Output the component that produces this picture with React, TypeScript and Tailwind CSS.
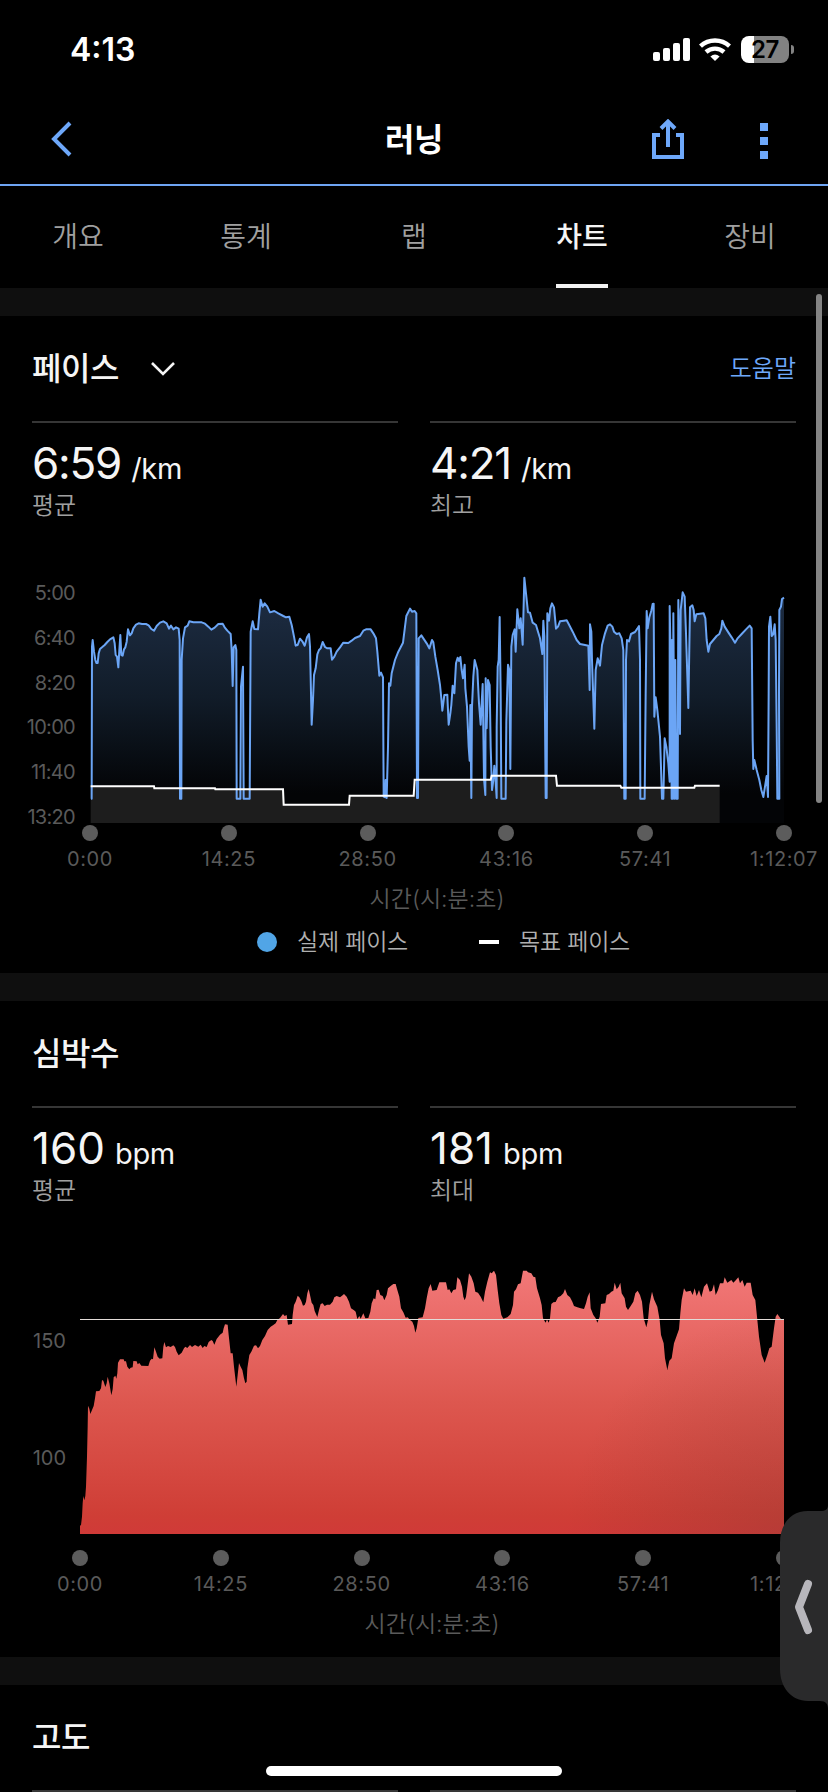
import { ReactNode } from 'react';

const tabs = ['개요', '통계', '랩', '차트', '장비'];
const times = ['0:00', '14:25', '28:50', '43:16', '57:41', '1:12:07'];
const paces = ['5:00', '6:40', '8:20', '10:00', '11:40', '13:20'];

const paceLine =
  '213,716 215,716 216,260 218,240 222,275 226,300 229,309 233,309 236,280 240,267 246,262 254,255 262,246 270,238 280,232 284,250 287,285 291,290 295,322 298,270 301,225 304,285 308,287 312,268 316,262 320,245 324,208 330,226 335,220 340,205 348,194 356,190 366,192 378,192 386,196 394,207 402,212 410,198 420,188 430,184 440,190 447,206 453,197 460,208 468,202 476,206 479,240 480,716 484,716 485,300 489,235 495,202 503,197 508,184 520,187 545,187 555,191 565,200 574,209 584,203 595,192 608,191 614,202 622,212 632,222 635,270 638,378 641,262 646,255 649,270 650,716 661,716 663,380 669,320 671,716 689,716 692,215 698,184 703,207 714,208 718,160 722,119 728,140 734,130 742,140 750,157 763,153 775,160 790,168 798,172 ' +
  '808,170 815,195 822,230 827,257 833,255 840,236 847,244 854,257 861,232 867,222 870,260 873,400 875,494 879,420 882,345 887,325 892,283 897,270 902,265 908,246 915,261 922,265 932,265 936,299 943,290 950,275 960,262 970,248 985,249 995,242 1005,234 1020,228 1030,212 1038,208 1052,208 1060,220 1068,235 1072,275 1078,347 1083,338 1089,352 1091,710 1096,712 1097,660 1100,714 1104,560 1107,370 1111,377 1115,340 1125,300 1135,275 1149,248 1155,200 1159,168 1165,156 1170,146 1176,155 1184,153 1189,160 1191,714 1194,714 1196,235 1204,226 1212,238 1220,250 1228,265 1236,240 1240,247 1246,290 1253,330 1260,375 1264,415 1267,452 1273,405 1282,404 1283,430 1286,494 1291,460 1294,435 1298,377 1303,400 1308,310 1313,293 1317,303 1321,291 1325,330 1329,355 1334,314 1336,385 1341,440 1346,560 1349,602 1351,435 1354,714 1356,440 1360,350 1364,300 1372,330 1377,430 1382,494 1385,430 1388,372 1392,655 1396,705 1397,355 1400,505 1404,360 1409,375 1412,560 1416,690 1420,660 1423,617 1426,650 1430,714 1430,500 1433,320 1436,300 1439,171 1442,400 1444,716 1457,716 1459,485 1464,314 1468,330 1471,627 1474,260 1478,225 1484,208 1487,275 1492,148 1498,205 1502,175 1508,254 1513,53 1518,100 1524,157 1530,158 1538,188 1548,195 1554,215 ' +
  '1560,235 1564,262 1567,282 1570,182 1573,230 1577,714 1580,714 1582,160 1587,182 1591,145 1596,130 1602,142 1608,206 1614,200 1620,184 1632,182 1640,181 1646,192 1658,215 1670,240 1680,252 1695,255 1705,257 1709,390 1710,193 1714,215 1716,300 1723,506 1727,330 1733,295 1740,317 1746,255 1755,220 1763,197 1770,193 1777,200 1782,215 1790,222 1798,220 1805,235 1810,270 1813,716 1817,716 1818,300 1821,240 1827,244 1833,222 1845,216 1852,206 1857,198 1860,300 1861,716 1874,716 1877,400 1880,153 1883,205 1888,172 1894,152 1898,132 1901,131 1903,470 1907,412 1912,450 1920,530 1926,716 1930,716 1934,535 1939,560 1945,610 1949,665 1949,138 1952,300 1955,716 1956,240 1959,716 1960,160 1964,716 1966,300 1969,716 1973,716 1975,120 1980,522 1982,150 1988,97 1994,110 1998,220 2005,444 2010,142 2017,136 2021,150 2024,184 2029,163 2040,161 2051,160 2056,175 2060,240 2065,275 2070,252 2080,240 2090,228 2098,222 2104,205 2107,182 2114,200 2125,217 2135,232 2145,248 2152,236 2165,222 2178,208 2189,197 2195,205 2198,540 2200,627 2203,600 2210,630 2218,660 2224,690 2230,711 2235,680 2240,648 2244,711 2246,400 2247,200 2251,170 2255,228 2260,222 2264,193 2267,240 2270,500 2272,716 2278,716 2277,400 2278,150 2283,140 2286,117 2292,113';

const targetLine =
  '212,679 402,679 403,685 585,685 586,688 789,688 791,734 987,734 989,707 1181,707 1184,659 1412,659 1415,647 1608,647 1611,677 1801,677 1804,683 2023,683 2025,677 2099,677';

const heartLine =
  '240,857 243,855 246,830 248,790 250,768 253,781 256,768 258,740 261,650 263,560 264,497 268,506 271,522 276,510 281,498 285,475 288,454 298,453 303,445 306,420 310,422 316,441 320,430 323,410 328,430 334,466 338,448 341,412 346,407 349,416 352,400 354,368 360,358 371,358 373,364 378,364 382,380 388,388 392,383 398,382 400,363 410,364 413,373 418,369 424,377 445,378 450,362 455,356 459,358 463,322 468,335 473,350 479,356 487,355 490,320 493,306 498,322 504,318 512,321 520,316 525,321 530,335 536,346 545,338 552,325 556,320 562,324 570,315 576,321 585,315 595,320 602,314 608,324 613,318 620,321 626,306 634,300 638,303 643,314 650,297 660,284 668,278 671,265 675,253 683,254 686,285 692,340 698,340 702,380 709,440 713,405 717,369 722,380 727,390 732,415 736,430 740,425 742,385 748,345 754,335 762,317 768,316 774,325 780,318 787,300 795,288 803,270 812,260 820,255 827,250 832,240 840,234 849,222 854,228 860,225 864,254 876,252 878,225 882,195 887,185 893,167 898,172 904,183 909,197 914,195 918,185 922,160 926,147 930,165 935,188 940,195 944,213 952,231 957,210 962,192 968,190 974,198 981,194 990,194 998,185 1003,172 1010,168 1020,172 1026,167 1032,162 1040,170 1047,185 1053,205 1062,211 1067,215 1072,237 1078,228 1082,236 1090,220 1096,235 1105,234 1111,215 1115,190 1121,175 1126,178 1130,150 1136,149 1141,165 1148,168 1153,181 1160,165 1164,145 1172,138 1180,132 1187,132 1192,150 1198,170 1203,205 1210,217 1217,233 1223,232 1230,240 1237,245 ' +
  '1242,258 1246,278 1250,265 1255,234 1268,232 1275,205 1280,175 1286,145 1292,132 1297,152 1310,150 1318,127 1338,127 1343,150 1348,148 1354,160 1360,150 1368,148 1372,112 1380,120 1386,140 1390,170 1394,181 1398,170 1402,140 1407,100 1414,110 1421,130 1426,155 1434,158 1442,170 1450,187 1455,155 1462,125 1470,97 1475,100 1482,92 1488,105 1493,150 1498,190 1504,225 1510,236 1522,232 1532,222 1539,195 1542,155 1548,148 1554,133 1562,130 1569,92 1580,92 1584,97 1594,100 1600,110 1606,112 1611,145 1620,175 1625,195 1629,235 1637,248 1641,238 1646,248 1650,235 1654,192 1660,187 1667,186 1674,172 1682,168 1690,160 1695,147 1702,165 1710,172 1717,185 1722,198 1732,202 1742,205 1752,207 1758,190 1763,170 1769,157 1772,205 1780,225 1787,235 1792,248 1799,230 1803,192 1816,190 1820,165 1827,162 1834,155 1840,152 1844,128 1850,148 1856,140 1861,128 1865,160 1874,175 1878,200 1884,210 1892,198 1900,185 1906,160 1913,152 1920,165 1926,185 1931,235 1939,262 1944,240 1948,195 1956,155 1962,178 1972,200 1979,240 1983,285 1991,310 1995,355 2002,390 2008,362 2015,355 2022,310 2029,290 2037,268 2041,220 2045,180 2052,145 2058,155 2072,152 2078,165 2084,145 2090,168 2097,150 2104,172 2112,140 2121,130 2129,155 2136,152 2142,133 2147,165 2154,150 2160,130 2170,130 2174,112 2182,128 2194,120 2200,128 2208,120 2215,112 2220,130 2227,120 2234,140 2240,128 2252,128 2258,165 2266,180 2271,230 2277,290 2285,345 2294,368 2302,345 2308,325 2315,320 2322,265 2327,230 2332,222 2339,232 2345,240 2352,236';

const StatusBar = () => (
  <div className="flex h-24 items-start justify-between pl-[70px] pr-[34px]">
    <div className="mt-[34px] text-[32px] font-semibold leading-8 text-white">4:13</div>
    <div className="mt-9 flex items-start">
      <svg width="38" height="27" viewBox="0 0 38 27" fill="#fff">
        <rect x="0" y="16" width="7" height="9" rx="2" />
        <rect x="10" y="12" width="7" height="13" rx="2" />
        <rect x="20" y="7" width="7" height="18" rx="2" />
        <rect x="30" y="2" width="7" height="23" rx="2" />
      </svg>
      <svg className="ml-2" width="33" height="27" viewBox="0 0 33 27" fill="none" stroke="#fff" strokeWidth="4.4">
        <path d="M1.5 10.2a21.5 21.5 0 0 1 29 0" />
        <path d="M7 16a13.6 13.6 0 0 1 18 0" />
        <path d="M11.4 20.4a7.4 7.4 0 0 1 9.2 0L16 25z" fill="#fff" stroke="none" />
      </svg>
      <div className="ml-[9px] flex h-[27px] w-12 items-center justify-center overflow-hidden rounded-lg bg-[linear-gradient(to_right,#fff_13px,#828282_13px)] text-[24px] font-semibold leading-none tracking-[-0.5px] text-black">
        27
      </div>
      <div className="ml-0.5 mt-[9px] h-[9px] w-[3px] rounded-r-full bg-[#828282]" />
    </div>
  </div>
);

const Header = () => (
  <div className="grid h-[90px] grid-cols-3 items-center border-b-2 border-[#6fa5f3] pb-0.5">
    <svg className="ml-[51px]" width="22" height="36" viewBox="0 0 22 36" fill="none" stroke="#6ea8fa" strokeWidth="4">
      <path d="M19 2 3 18l16 16" />
    </svg>
    <div className="pt-0.5 text-center text-[32px] font-bold leading-none tracking-[-0.5px] text-white">러닝</div>
    <div className="flex items-center justify-end pr-[60px]">
      <svg width="32" height="40" viewBox="0 0 32 40" fill="none" stroke="#6ea8fa" strokeWidth="4">
        <path d="M8 16H2v22h28V16h-6M16 28V3M9 9.5l7-7 7 7" />
      </svg>
      <div className="ml-[76px] mt-1 flex flex-col gap-1.5">
        <div className="size-2 bg-[#6ea8fa]" />
        <div className="size-2 bg-[#6ea8fa]" />
        <div className="size-2 bg-[#6ea8fa]" />
      </div>
    </div>
  </div>
);

const TabBar = () => (
  <div className="-mx-1.5 grid h-[102px] grid-cols-5">
    {tabs.map((tab) => (
      <div
        key={tab}
        className={
          tab === '차트'
            ? 'mx-auto w-[52px] border-b-4 border-[#f2f2f2] pt-1 text-center text-[28px] font-medium leading-[94px] text-[#f5f5f5]'
            : 'pt-1 text-center text-[28px] font-[350] leading-[94px] text-[#a0a0a0]'
        }
      >
        {tab}
      </div>
    ))}
  </div>
);

const Divider = () => <div className="h-7 bg-[#0f0f0f]" />;

const Title = ({ text, children }: { text: string; children?: ReactNode }) => (
  <div className="flex h-[105px] items-center px-8">
    <h2 className="text-[32px] font-medium leading-none tracking-[-0.4px] text-[#f5f5f5]">{text}</h2>
    {children}
  </div>
);

const Stat = ({ value, unit, label }: { value: string; unit: string; label: string }) => (
  <div className="flex-1 border-t-2 border-[#363636] pt-[15px]">
    <div className="flex items-baseline gap-2.5 leading-[50px] text-[#f5f5f5]">
      <span className={unit === 'bpm' ? 'text-[44px]' : 'text-[44px] tracking-[-1.2px]'}>{value}</span>
      <span className="text-[29px] tracking-[-0.3px]">{unit}</span>
    </div>
    <div className="-mt-0.5 text-[24px] font-[350] leading-7 text-[#a0a0a0]">{label}</div>
  </div>
);

const Stats = ({ children }: { children: ReactNode }) => <div className="flex gap-8 px-8">{children}</div>;

const TimeAxis = () => (
  <>
    <div className="flex justify-between">
      {times.map((time) => (
        <div key={time} className="flex w-0 flex-col items-center">
          <div className="size-4 rounded-full bg-[#5c5c5c]" />
          <span className="text-[20px] leading-9 tracking-[0.6px] text-[#5a5a5a]">{time}</span>
        </div>
      ))}
    </div>
    <div className="mt-1 text-center text-[23px] font-[350] leading-9 text-[#5a5a5a]">시간(시:분:초)</div>
  </>
);

const PaceChart = () => (
  <div className="mt-10 flex pr-11">
    <div className="mt-[11px] flex w-[90px] flex-col pr-[15px] text-right text-[20px] leading-[44.8px] tracking-[-0.7px] text-[#5a5a5a]">
      {paces.map((pace) => (
        <span key={pace}>{pace}</span>
      ))}
    </div>
    <div className="flex-1">
      <svg className="block overflow-visible" width="694" height="263" viewBox="210 0 2082 789">
        <defs>
          <linearGradient id="pace" gradientUnits="userSpaceOnUse" x1="0" y1="120" x2="0" y2="700">
            <stop offset="0" stopColor="#1d2c42" />
            <stop offset="0.5" stopColor="#111c29" />
            <stop offset="1" stopColor="#030406" />
          </linearGradient>
        </defs>
        <polygon points={`213,789 ${paceLine} 2292,789`} fill="url(#pace)" />
        <polygon points={`212,789 ${targetLine} 2099,789`} fill="#1d1d1d" />
        <polyline points={paceLine} fill="none" stroke="#6ba5f5" strokeWidth="6" strokeLinejoin="round" />
        <polyline points={targetLine} fill="none" stroke="#fff" strokeWidth="6" />
      </svg>
      <div className="mt-0.5">
        <TimeAxis />
      </div>
    </div>
  </div>
);

const Legend = () => (
  <div className="mt-[7px] flex h-9 items-center pl-[257px] text-[23px] font-[350] tracking-[-0.2px] text-[#b0b0b0]">
    <div className="size-5 rounded-full bg-[#51a5e6]" />
    <span className="ml-5 w-[182px]">실제 페이스</span>
    <div className="h-1 w-5 bg-white" />
    <span className="ml-5">목표 페이스</span>
  </div>
);

const HeartRateChart = () => (
  <div className="mt-[35px] flex pr-11">
    <div className="flex w-20 flex-col gap-[87px] pr-[14px] pt-[86px] text-right text-[20px] leading-[30px] text-[#5a5a5a]">
      <span>150</span>
      <span>100</span>
    </div>
    <div className="flex-1">
      <svg className="block" width="704" height="294" viewBox="240 0 2112 882">
        <defs>
          <linearGradient id="heart" gradientUnits="userSpaceOnUse" x1="0" y1="90" x2="0" y2="882">
            <stop offset="0" stopColor="#f27878" />
            <stop offset="0.5" stopColor="#dd574f" />
            <stop offset="0.93" stopColor="#cf3e36" />
            <stop offset="1" stopColor="#d03a38" />
          </linearGradient>
          <radialGradient id="shade" gradientUnits="userSpaceOnUse" cx="2400" cy="900" r="700">
            <stop offset="0" stopColor="#8f3c34" stopOpacity="0.4" />
            <stop offset="1" stopColor="#8f3c34" stopOpacity="0" />
          </radialGradient>
        </defs>
        <polygon points={`240,882 ${heartLine} 2352,882`} fill="url(#heart)" />
        <polygon points={`240,882 ${heartLine} 2352,882`} fill="url(#shade)" />
        <path d="M240 238.5H2352" stroke="#e2dcd8" strokeWidth="3" />
      </svg>
      <div className="mt-4">
        <TimeAxis />
      </div>
    </div>
  </div>
);

const SideHandle = () => (
  <svg className="absolute left-[780px] top-[1505px]" width="48" height="204" viewBox="0 0 48 204" fill="none">
    <path d="M48 0c0 4-2 6-8 6H28C10 6 0 20 0 38v126c0 18 11 32 28 32h12c6 0 8 3 8 8z" fill="#2a2a2b" />
    <path d="M28 79 19 102l9 23" stroke="#b7b6bb" strokeWidth="8" strokeLinecap="round" strokeLinejoin="round" />
  </svg>
);

const App = () => {
  return (
    <div className="relative h-[1792px] w-[828px] overflow-hidden bg-black font-['Inter','Noto_Sans_CJK_KR',sans-serif]">
      <StatusBar />
      <Header />
      <TabBar />
      <Divider />
      <section className="h-[657px]">
        <Title text="페이스">
          <svg className="ml-8" width="24" height="16" viewBox="0 0 24 16" fill="none" stroke="#f5f5f5" strokeWidth="2.6">
            <path d="M1 2l11 11L23 2" />
          </svg>
          <span className="ml-auto text-[24px] font-[350] text-[#6ea8fa]">도움말</span>
        </Title>
        <Stats>
          <Stat value="6:59" unit="/km" label="평균" />
          <Stat value="4:21" unit="/km" label="최고" />
        </Stats>
        <PaceChart />
        <Legend />
      </section>
      <Divider />
      <section className="h-[656px]">
        <Title text="심박수" />
        <Stats>
          <Stat value="160" unit="bpm" label="평균" />
          <Stat value="181" unit="bpm" label="최대" />
        </Stats>
        <HeartRateChart />
      </section>
      <Divider />
      <section>
        <Title text="고도" />
        <Stats>
          <div className="flex-1 border-t-2 border-[#363636]" />
          <div className="flex-1 border-t-2 border-[#363636]" />
        </Stats>
      </section>
      <div className="absolute left-[816px] top-[294px] h-[509px] w-1.5 rounded-full bg-[#848484]" />
      <SideHandle />
      <div className="absolute left-[266px] top-[1766px] h-2.5 w-[296px] rounded-full bg-white" />
    </div>
  );
};

export default App;
